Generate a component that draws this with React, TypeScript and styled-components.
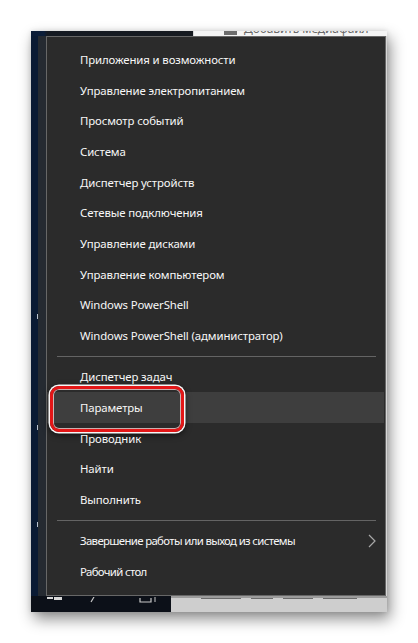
import styled, { createGlobalStyle } from "styled-components";

const GlobalStyle = createGlobalStyle`
  html, body {
    margin: 0;
    padding: 0;
    background: #ffffff;
  }
  body {
    font-family: "Noto Sans", "Open Sans", sans-serif;
  }
`;

const Page = styled.div`
  width: 418px;
  height: 643px;
  padding: 31px 0 0 31px;
  box-sizing: border-box;
  overflow: hidden;
`;

const Frame = styled.div`
  width: 356px;
  height: 581px;
  display: flex;
  flex-direction: column;
  box-shadow: 3px 7px 14px rgba(0, 0, 0, 0.45), 0 0 5px rgba(0, 0, 0, 0.12);
`;

const TopStrip = styled.div`
  height: 5px;
  display: flex;
`;

const NavyBlock = styled.div<{ $width: number }>`
  width: ${(p) => p.$width}px;
  background: linear-gradient(90deg, #0b1b35 0%, #0c1e3a 8%, #151a22 10%, #161a20 100%);
`;

const DocPane = styled.div`
  flex: 1;
  background: #f4f4f4;
  border-left: 1px solid #d8d8d8;
  display: flex;
  align-items: flex-start;
  gap: 7px;
  padding-left: 30px;
  overflow: hidden;
`;

const MediaIcon = styled.div`
  width: 13px;
  height: 4px;
  background: #6d6d6d;
  flex: none;
`;

const DocCaption = styled.span`
  margin-top: -9px;
  font-size: 12px;
  line-height: 14px;
  letter-spacing: -0.1px;
  color: #6a6a6a;
  white-space: nowrap;
`;

const Middle = styled.div`
  flex: 1;
  display: flex;
  min-height: 0;
`;

const SideEdge = styled.div`
  width: 15px;
  background: linear-gradient(90deg, #0a1a33 0 7px, #252a31 7px 100%);
  display: flex;
  flex-direction: column;
  align-items: flex-start;
  padding-left: 6px;
  box-sizing: border-box;
`;

const EdgeMark = styled.div<{ $top: number }>`
  width: 1px;
  height: 5px;
  margin-top: ${(p) => p.$top}px;
  background: #b7c0cc;
`;

const Menu = styled.div`
  width: 340px;
  box-sizing: border-box;
  background: #2b2b2b;
  border: 1px solid #676767;
  padding: 7px 0 8px;
  display: flex;
  flex-direction: column;
`;

const RightEdge = styled.div`
  width: 1px;
  background: #d5d5d5;
`;

const Item = styled.div<{ $active?: boolean; $tight?: boolean }>`
  position: relative;
  height: 30.7px;
  display: flex;
  align-items: center;
  justify-content: space-between;
  padding: 0 8px 0 33px;
  margin-right: 1px;
  background: ${(p) => (p.$active ? "#3e3e3e" : "transparent")};
  color: #f7f7f7;
  font-size: 11.4px;
  letter-spacing: ${(p) => (p.$tight ? "-0.65px" : "-0.12px")};
  white-space: nowrap;
`;

const Divider = styled.div`
  height: 1px;
  background: #646464;
  margin: 5px 9px 4.5px 10px;
`;

const Callout = styled.div`
  position: absolute;
  left: 3px;
  top: -6px;
  width: 134px;
  height: 46px;
  box-sizing: border-box;
  border: 3px solid #e41617;
  border-radius: 9px;
  box-shadow: 0 0 0 1.5px #f6f6f6, inset 0 0 0 1px rgba(255, 220, 220, 0.75),
    0 2px 6px 1px rgba(0, 0, 0, 0.6);
  pointer-events: none;
`;

const BottomStrip = styled.div`
  height: 16px;
  display: flex;
`;

const Taskbar = styled.div`
  width: 140px;
  background: #0c1018;
`;

const SheetEdge = styled.div`
  flex: 1;
  background: #cecece;
  border-top: 2px solid #9c9c9c;
  display: flex;
  padding: 0 0 0 30px;
  gap: 10px;
`;

const Fragment = styled.div<{ $width: number }>`
  width: ${(p) => p.$width}px;
  height: 1px;
  background: #6b6b6b;
`;

const Chevron = () => (
  <svg width="8" height="14" viewBox="0 0 8 14">
    <polyline points="1,1 7,7 1,13" fill="none" stroke="#a8a8a8" strokeWidth="1.2" />
  </svg>
);

const TaskbarIcons = () => (
  <svg width="140" height="16" viewBox="0 0 140 16">
    <rect x="16" y="0" width="6" height="2" fill="#d8d8d8" />
    <rect x="23" y="0" width="8" height="3" fill="#d8d8d8" />
    <line x1="63" y1="0" x2="60" y2="5" stroke="#c8c8c8" strokeWidth="1.2" />
    <polyline points="109,1 109,5 120,5 120,1" fill="none" stroke="#c8c8c8" strokeWidth="1.2" />
    <line x1="124" y1="0" x2="124" y2="5" stroke="#c8c8c8" strokeWidth="1" />
  </svg>
);

const systemTools = [
  "Приложения и возможности",
  "Управление электропитанием",
  "Просмотр событий",
  "Система",
  "Диспетчер устройств",
  "Сетевые подключения",
  "Управление дисками",
  "Управление компьютером",
  "Windows PowerShell",
  "Windows PowerShell (администратор)",
];

const shellTools = ["Диспетчер задач", "Параметры", "Проводник", "Найти", "Выполнить"];

export default function App() {
  return (
    <>
      <GlobalStyle />
      <Page>
        <Frame>
          <TopStrip>
            <NavyBlock $width={162} />
            <DocPane>
              <MediaIcon />
              <DocCaption>Добавить медиафайл</DocCaption>
            </DocPane>
          </TopStrip>
          <Middle>
            <SideEdge>
              <EdgeMark $top={278} />
              <EdgeMark $top={106} />
              <EdgeMark $top={92} />
            </SideEdge>
            <Menu>
              {systemTools.map((label) => (
                <Item key={label}>{label}</Item>
              ))}
              <Divider />
              {shellTools.map((label) => (
                <Item key={label} $active={label === "Параметры"}>
                  {label}
                  {label === "Параметры" && <Callout />}
                </Item>
              ))}
              <Divider />
              <Item $tight>
                Завершение работы или выход из системы
                <Chevron />
              </Item>
              <Item $tight>Рабочий стол</Item>
            </Menu>
            <RightEdge />
          </Middle>
          <BottomStrip>
            <Taskbar>
              <TaskbarIcons />
            </Taskbar>
            <SheetEdge>
              <Fragment $width={40} />
              <Fragment $width={22} />
              <Fragment $width={30} />
              <Fragment $width={34} />
            </SheetEdge>
          </BottomStrip>
        </Frame>
      </Page>
    </>
  );
}
